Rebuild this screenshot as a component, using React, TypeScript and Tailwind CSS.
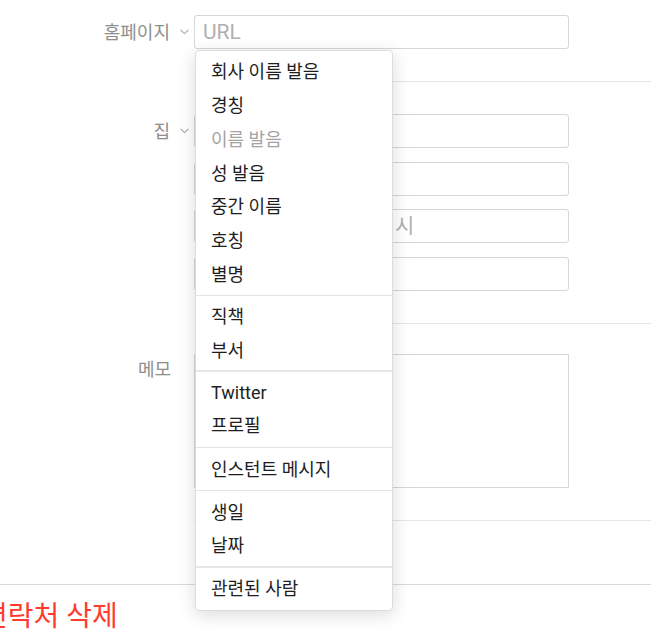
import React from "react";

const FONT = { fontFamily: 'Roboto, "Noto Sans CJK KR", "Noto Sans", sans-serif' };

function Chevron() {
  return (
    <svg width="9" height="6" viewBox="0 0 9 6" className="shrink-0">
      <path d="M1 1.2 L4.5 4.6 L8 1.2" fill="none" stroke="#b4b4b4" strokeWidth="1.3" strokeLinecap="round" strokeLinejoin="round" />
    </svg>
  );
}

function Label({ text, chevron = true }: { text: string; chevron?: boolean }) {
  return (
    <div className={`flex h-[34px] items-center justify-end ${chevron ? "gap-[10px] pr-[5px]" : "pr-[23px]"}`}>
      <span className="text-[18px] text-[#8e8e8e]">{text}</span>
      {chevron && <Chevron />}
    </div>
  );
}

function Field({ placeholder = "", className = "" }: { placeholder?: string; className?: string }) {
  return (
    <div className={`flex h-[34px] items-center rounded-[3px] border border-[#d6d6d6] bg-white px-[8px] ${className}`}>
      <span className="text-[21px] text-[#b0b0b0] leading-none">{placeholder}</span>
    </div>
  );
}

type Item = { label: string; disabled?: boolean } | { sep: "thin" | "wide" | "thick" };

const items: Item[] = [
  { label: "회사 이름 발음" },
  { label: "경칭" },
  { label: "이름 발음", disabled: true },
  { label: "성 발음" },
  { label: "중간 이름" },
  { label: "호칭" },
  { label: "별명" },
  { sep: "thin" },
  { label: "직책" },
  { label: "부서" },
  { sep: "thick" },
  { label: "Twitter" },
  { label: "프로필" },
  { sep: "wide" },
  { label: "인스턴트 메시지" },
  { sep: "wide" },
  { label: "생일" },
  { label: "날짜" },
  { sep: "thick" },
  { label: "관련된 사람" },
];

function Menu() {
  return (
    <div className="absolute left-[195px] top-[50px] w-[198px] rounded-[4px] border border-[#dcdcdc] bg-white pt-[4px] pb-[5px] shadow-[0_4px_18px_rgba(0,0,0,0.14)]">
      {items.map((it, i) =>
        "sep" in it ? (
          it.sep === "thick" ? (
            <div key={i} className="my-[3.2px] h-[2px] bg-[#e6e6e6]" />
          ) : it.sep === "wide" ? (
            <div key={i} className="my-[4.2px] h-px bg-[#e3e3e3]" />
          ) : (
            <div key={i} className="my-[3.6px] h-px bg-[#e3e3e3]" />
          )
        ) : (
          <div
            key={i}
            className={`flex h-[33.75px] items-center pl-[15px] text-[18px] ${it.disabled ? "text-[#a3a3a3]" : "text-[#1e1e1e]"}`}
          >
            {it.label}
          </div>
        )
      )}
    </div>
  );
}

export default function App() {
  return (
    <div className="relative h-[639px] w-[651px] overflow-hidden bg-white" style={FONT}>
      {/* Homepage */}
      <div className="grid grid-cols-[194px_1fr]">
        <div className="pt-[15px]">
          <Label text="홈페이지" />
        </div>
        <div className="border-b border-[#e6e6e6] pt-[15px] pb-[32px] pr-[82px]">
          <Field placeholder="URL" />
        </div>
      </div>

      {/* Address */}
      <div className="grid grid-cols-[194px_1fr]">
        <div className="pt-[32px]">
          <Label text="집" />
        </div>
        <div className="flex flex-col gap-[13.5px] border-b border-[#e6e6e6] pt-[32px] pb-[32px] pr-[82px]">
          <Field />
          <Field />
          <div className="flex gap-[3px]">
            <Field className="w-[189px]" />
            <Field placeholder="시" className="flex-1" />
          </div>
          <Field />
        </div>
      </div>

      {/* Memo */}
      <div className="grid grid-cols-[194px_1fr]">
        <div className="pt-[29px]">
          <Label text="메모" chevron={false} />
        </div>
        <div className="border-b border-[#e6e6e6] pt-[30px] pb-[32px] pr-[82px]">
          <div className="h-[134px] border border-[#d6d6d6] bg-white" />
        </div>
      </div>

      <div className="h-[63px]" />

      <div className="border-t border-[#d9d9d9] pt-[16px]">
        <div className="ml-[-18px] text-[28px] leading-[32px] text-[#ff3b30]">연락처 삭제</div>
      </div>

      <Menu />
    </div>
  );
}
